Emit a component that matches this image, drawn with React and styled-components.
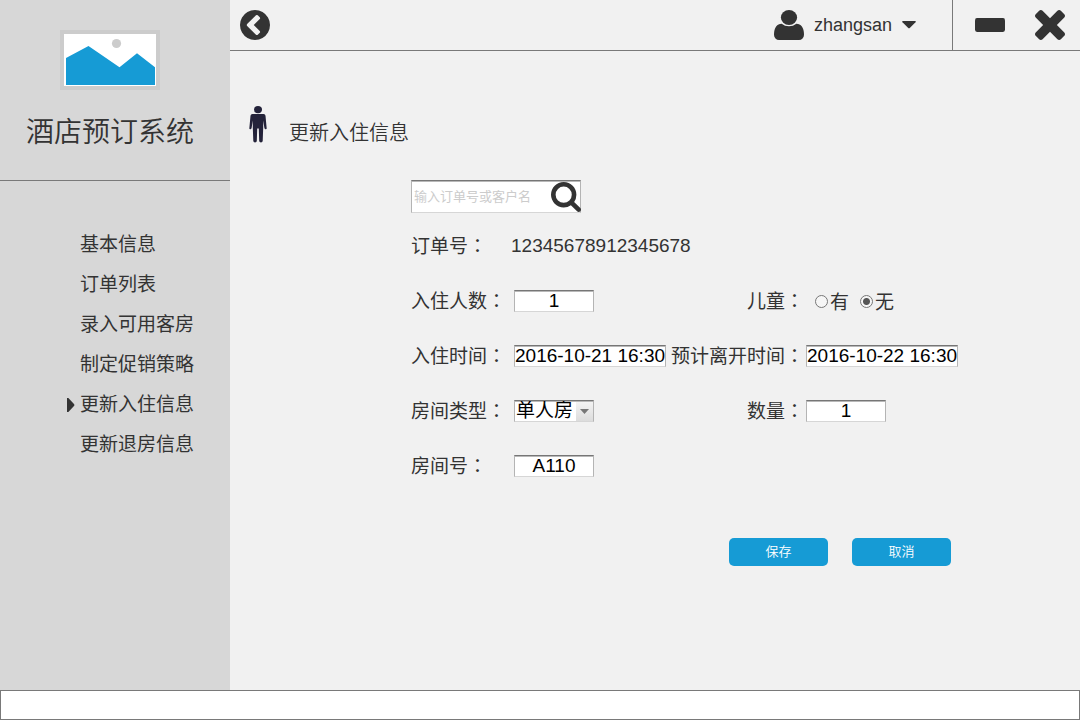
import React, { useState } from "react";
import styled, { createGlobalStyle, css } from "styled-components";

const sans = '"Liberation Sans", "Noto Sans CJK SC", sans-serif';

const GlobalStyle = createGlobalStyle`
  *, *::before, *::after { box-sizing: border-box; }
  body {
    margin: 0;
    background: #f1f1f1;
    color: #333;
    font-family: ${sans};
    font-size: 19px;
    font-weight: 400;
    line-height: 22px;
  }
  button, input, select { font: inherit; }
`;

const Page = styled.div`
  min-height: 100vh;
  display: flex;
  flex-direction: column;
`;

const Body = styled.div`
  flex: 1;
  display: flex;
`;

const Sidebar = styled.aside`
  flex: 0 0 230px;
  background: #d7d7d7;
`;

const Brand = styled.div`
  height: 181px;
  padding: 30px 10px 0 0;
  border-bottom: 1px solid #797979;
  display: flex;
  flex-direction: column;
  align-items: center;
  gap: 25px;
`;

const BrandName = styled.h1`
  margin: 0;
  font-size: 28px;
  font-weight: 350;
  line-height: 36px;
`;

const Menu = styled.ul`
  list-style: none;
  margin: 0;
  padding: 44px 0 0;
`;

const MenuLink = styled.a`
  height: 40px;
  padding-left: 67px;
  display: flex;
  align-items: center;
  gap: 5px;
  color: inherit;
  line-height: 24px;
  text-decoration: none;
  white-space: nowrap;
`;

const Marker = styled.span`
  flex: 0 0 8px;
  display: flex;
`;

const Main = styled.main`
  flex: 1;
  min-width: 0;
`;

const TopBar = styled.header`
  height: 51px;
  border-bottom: 1px solid #797979;
  display: flex;
  justify-content: space-between;
  padding-left: 10px;
`;

const TopGroup = styled.div`
  display: flex;
`;

const IconButton = styled.button`
  border: 0;
  padding: 0;
  background: none;
  color: #333;
  display: flex;
  align-items: center;
  cursor: pointer;
`;

const UserButton = styled(IconButton)`
  font-size: 18px;
  gap: 10px;
  padding-right: 36px;
`;

const WindowControls = styled.div`
  display: flex;
  gap: 30px;
  padding: 0 15px 0 22px;
  border-left: 1px solid #797979;
`;

const Heading = styled.div`
  display: flex;
  align-items: flex-end;
  gap: 22px;
  padding: 54px 0 0 19px;
`;

const Title = styled.h2`
  margin: 0;
  font-size: 20px;
  font-weight: 350;
  line-height: 20px;
`;

const Form = styled.form`
  padding: 37px 0 0 181px;
`;

const sunken = css`
  background: #fff;
  border: 1px solid;
  border-color: #767676 #b4b4b4 #d6d6d6 #b4b4b4;
  box-shadow: inset 0 1px 0 #b8b8b8;
`;

const SearchBox = styled.div`
  ${sunken}
  width: 170px;
  height: 33px;
  padding-left: 2px;
  display: flex;
  align-items: center;
`;

const SearchInput = styled.input`
  flex: 1;
  min-width: 0;
  border: 0;
  padding: 0;
  background: none;
  outline: none;
  font-size: 13px;
  &::placeholder { color: #ccc; opacity: 1; }
`;

const SearchButton = styled(IconButton)`
  margin-right: -1px;
`;

const OrderRow = styled.dl`
  height: 22px;
  margin: 22px 0 33px;
  display: flex;
  gap: 24px;
  dt, dd { margin: 0; }
`;

const Fields = styled.div`
  display: grid;
  grid-template-columns: 103px 152px 140px 152px;
  grid-auto-rows: 22px;
  row-gap: 33px;
  white-space: nowrap;
`;

const FieldLabel = styled.label`
  grid-column: ${(p) => (p.$right ? 3 : 1)};
  justify-self: ${(p) => (p.$right ? "end" : "start")};
  padding-right: ${(p) => (p.$right ? 2 : 0)}px;
`;

/* Traditional Chinese fonts centre the full-width colon in its cell. */
const Colon = styled.span`
  font-family: "Noto Sans CJK TC", sans-serif;
  line-height: 1;
`;

const TextBox = styled.input`
  ${sunken}
  width: ${(p) => (p.$wide ? "152px" : "80px")};
  height: 22px;
  padding: 0;
  color: #000;
  text-align: center;
  line-height: 20px;
`;

const SelectBox = styled.div`
  ${sunken}
  width: 80px;
  height: 22px;
  display: grid;
  grid-template-columns: 1fr 17px;
`;

const Select = styled.select`
  appearance: none;
  grid-area: 1 / 1 / 2 / 3;
  border: 0;
  padding: 0 0 0 1px;
  background: none;
  color: #000;
  line-height: 20px;
  min-width: 0;
`;

const Arrow = styled.span`
  grid-area: 1 / 2;
  margin-top: 1px;
  background: linear-gradient(#f3f3f3, #dcdcdc);
  color: #777;
  display: flex;
  align-items: center;
  justify-content: center;
  pointer-events: none;
`;

const RadioGroup = styled.div`
  display: flex;
  gap: 11px;
  padding-left: 9px;
`;

const RadioLabel = styled.label`
  height: 26px;
  display: flex;
  align-items: flex-start;
  gap: 2px;
  line-height: 26px;
`;

const Radio = styled.input`
  appearance: none;
  width: 13px;
  height: 13px;
  margin: 5px 0 0;
  border: 1px solid #777;
  border-radius: 50%;
  background: #f6f6f6;
  &:checked {
    background: radial-gradient(circle, #555 0 3px, #f6f6f6 4px);
  }
`;

const Actions = styled.div`
  width: 547px;
  padding: 61px 7px 0 0;
  display: flex;
  justify-content: flex-end;
  gap: 24px;
`;

const ActionButton = styled.button`
  width: 99px;
  height: 28px;
  border: 0;
  border-radius: 5px;
  padding: 0;
  background: #169bd5;
  color: #fff;
  font-size: 13px;
  font-weight: 350;
  cursor: pointer;
`;

const StatusBar = styled.footer`
  height: 30px;
  background: #fff;
  border: 1px solid #797979;
`;

const Glyph = ({ box, w, h, d }) => (
  <svg width={w} height={h} viewBox={box} fill="currentColor" aria-hidden="true">
    <path d={d} />
  </svg>
);

const BackIcon = () => (
  <Glyph w={30} h={30} box="128 128 1536 1536" d="M1037 1395l102-102q19-19 19-45t-19-45l-307-307 307-307q19-19 19-45t-19-45l-102-102q-19-19-45-19t-45 19l-454 454q-19 19-19 45t19 45l454 454q19 19 45 19t45-19zm627-499q0 209-103 385.5t-279.5 279.5-385.5 103-385.5-103-279.5-279.5-103-385.5 103-385.5 279.5-279.5 385.5-103 385.5 103 279.5 279.5 103 385.5z" />
);
const UserIcon = () => (
  <svg width="30" height="30" viewBox="256 128 1280 1536" preserveAspectRatio="none" fill="currentColor" aria-hidden="true">
    <path d="M1536 1399q0 109-62.5 187t-150.5 78h-854q-88 0-150.5-78t-62.5-187q0-85 8.5-160.5t31.5-152 58.5-131 94-89 134.5-34.5q131 128 313 128t313-128q76 0 134.5 34.5t94 89 58.5 131 31.5 152 8.5 160.5z" />
    <ellipse cx="896" cy="512" rx="346" ry="384" />
  </svg>
);
const CaretDown = () => (
  <Glyph w={14} h={8} box="0 0 14 8" d="M.8 0H13.2Q14.3.3 13.5 1.2L8 6.7Q7 7.7 6 6.7L.5 1.2Q-.3.3.8 0z" />
);
const CaretRight = () => <Glyph w={8} h={14} box="0 0 8 14" d="M0 0H1.4L7.2 6.2Q7.6 7 7.2 7.8L1.4 14H0z" />;
const MinusIcon = () => <Glyph w={30} h={14} box="0 0 30 14" d="M2 0H28Q30 0 30 2.4V11.6Q30 14 28 14H2Q0 14 0 11.6V2.4Q0 0 2 0z" />;
const CloseIcon = () => (
  <Glyph w={30} h={30} box="302 366 1188 1188" d="M1490 1322q0 40-28 68l-136 136q-28 28-68 28t-68-28l-294-294-294 294q-28 28-68 28t-68-28l-136-136q-28-28-28-68t28-68l294-294-294-294q-28-28-28-68t28-68l136-136q28-28 68-28t68 28l294 294 294-294q28-28 68-28t68 28l136 136q28 28 28 68t-28 68l-294 294 294 294q28 28 28 68z" />
);
const SearchIcon = () => (
  <Glyph w={30} h={30} box="64 128 1664 1664" d="M1216 832q0-185-131.5-316.5t-316.5-131.5-316.5 131.5-131.5 316.5 131.5 316.5 316.5 131.5 316.5-131.5 131.5-316.5zm512 832q0 52-38 90t-90 38q-54 0-90-38l-343-342q-179 124-399 124-143 0-273.5-55.5t-225-150-150-225-55.5-273.5 55.5-273.5 150-225 225-150 273.5-55.5 273.5 55.5 225 150 150 225 55.5 273.5q0 220-124 399l343 343q37 37 37 90z" />
);
const PersonIcon = () => (
  <svg width="18" height="38" viewBox="0 0 18 38" fill="#24233a" aria-hidden="true">
    <ellipse cx="9" cy="4.6" rx="4" ry="3.7" />
    <path d="M3.4 9H14.6Q16.3 9 16.5 10.8L17.7 23.4Q17.6 24.4 16.4 24.2Q15.6 24 15.4 23L14.2 15.5V22.5L13.7 36Q13.5 37.4 12 37.4Q10.3 37.4 10.2 36L9.8 23.5H8.2L7.8 36Q7.7 37.4 6 37.4Q4.5 37.4 4.3 36L3.8 22.5V15.5L2.6 23Q2.4 24 1.6 24.2Q.4 24.4.3 23.4L1.5 10.8Q1.7 9 3.4 9z" />
  </svg>
);
const Logo = () => (
  <svg width="100" height="60" viewBox="0 0 100 60" role="img" aria-label="酒店预订系统">
    <rect width="100" height="60" fill="#ccc" />
    <rect x="4" y="4" width="92" height="52" fill="#fff" />
    <path d="M6 28L28.5 16L59.5 37.3L77 23.3L95 37.3V55H6z" fill="#169bd5" />
    <circle cx="56.5" cy="13.5" r="4.6" fill="#ccc" />
  </svg>
);

const menuItems = ["基本信息", "订单列表", "录入可用客房", "制定促销策略", "更新入住信息", "更新退房信息"];

function Field({ id, label, value, right, wide }) {
  return (
    <>
      <FieldLabel htmlFor={id} $right={right}>{label}<Colon>：</Colon></FieldLabel>
      <TextBox id={id} defaultValue={value} $wide={wide} />
    </>
  );
}

export default function App() {
  const [children, setChildren] = useState("无");
  return (
    <Page>
      <GlobalStyle />
      <Body>
        <Sidebar>
          <Brand>
            <Logo />
            <BrandName>酒店预订系统</BrandName>
          </Brand>
          <nav>
            <Menu>
              {menuItems.map((item) => {
                const active = item === "更新入住信息";
                return (
                  <li key={item}>
                    <MenuLink href="#" aria-current={active ? "page" : undefined}>
                      <Marker>{active && <CaretRight />}</Marker>
                      {item}
                    </MenuLink>
                  </li>
                );
              })}
            </Menu>
          </nav>
        </Sidebar>
        <Main>
          <TopBar>
            <IconButton type="button" aria-label="返回"><BackIcon /></IconButton>
            <TopGroup>
              <UserButton type="button"><UserIcon />zhangsan<CaretDown /></UserButton>
              <WindowControls>
                <IconButton type="button" aria-label="最小化"><MinusIcon /></IconButton>
                <IconButton type="button" aria-label="关闭"><CloseIcon /></IconButton>
              </WindowControls>
            </TopGroup>
          </TopBar>
          <Heading>
            <PersonIcon />
            <Title>更新入住信息</Title>
          </Heading>
          <Form onSubmit={(e) => e.preventDefault()}>
            <SearchBox>
              <SearchInput type="text" aria-label="输入订单号或客户名" placeholder="输入订单号或客户名" />
              <SearchButton type="button" aria-label="搜索"><SearchIcon /></SearchButton>
            </SearchBox>
            <OrderRow>
              <dt>订单号<Colon>：</Colon></dt>
              <dd>12345678912345678</dd>
            </OrderRow>
            <Fields>
              <Field id="guests" label="入住人数" value="1" />
              <FieldLabel as="span" id="children" $right>儿童<Colon>：</Colon></FieldLabel>
              <RadioGroup role="radiogroup" aria-labelledby="children">
                {["有", "无"].map((v) => (
                  <RadioLabel key={v}>
                    <Radio type="radio" name="children" checked={children === v} onChange={() => setChildren(v)} />
                    {v}
                  </RadioLabel>
                ))}
              </RadioGroup>
              <Field id="checkin" label="入住时间" value="2016-10-21 16:30" wide />
              <Field id="checkout" label="预计离开时间" value="2016-10-22 16:30" right wide />
              <FieldLabel htmlFor="type">房间类型<Colon>：</Colon></FieldLabel>
              <SelectBox>
                <Arrow><Glyph w={9} h={5} box="0 0 9 5" d="M0 0H9L4.5 5z" /></Arrow>
                <Select id="type"><option>单人房</option></Select>
              </SelectBox>
              <Field id="count" label="数量" value="1" right />
              <Field id="room" label="房间号" value="A110" />
            </Fields>
            <Actions>
              <ActionButton type="submit">保存</ActionButton>
              <ActionButton type="button">取消</ActionButton>
            </Actions>
          </Form>
        </Main>
      </Body>
      <StatusBar />
    </Page>
  );
}
